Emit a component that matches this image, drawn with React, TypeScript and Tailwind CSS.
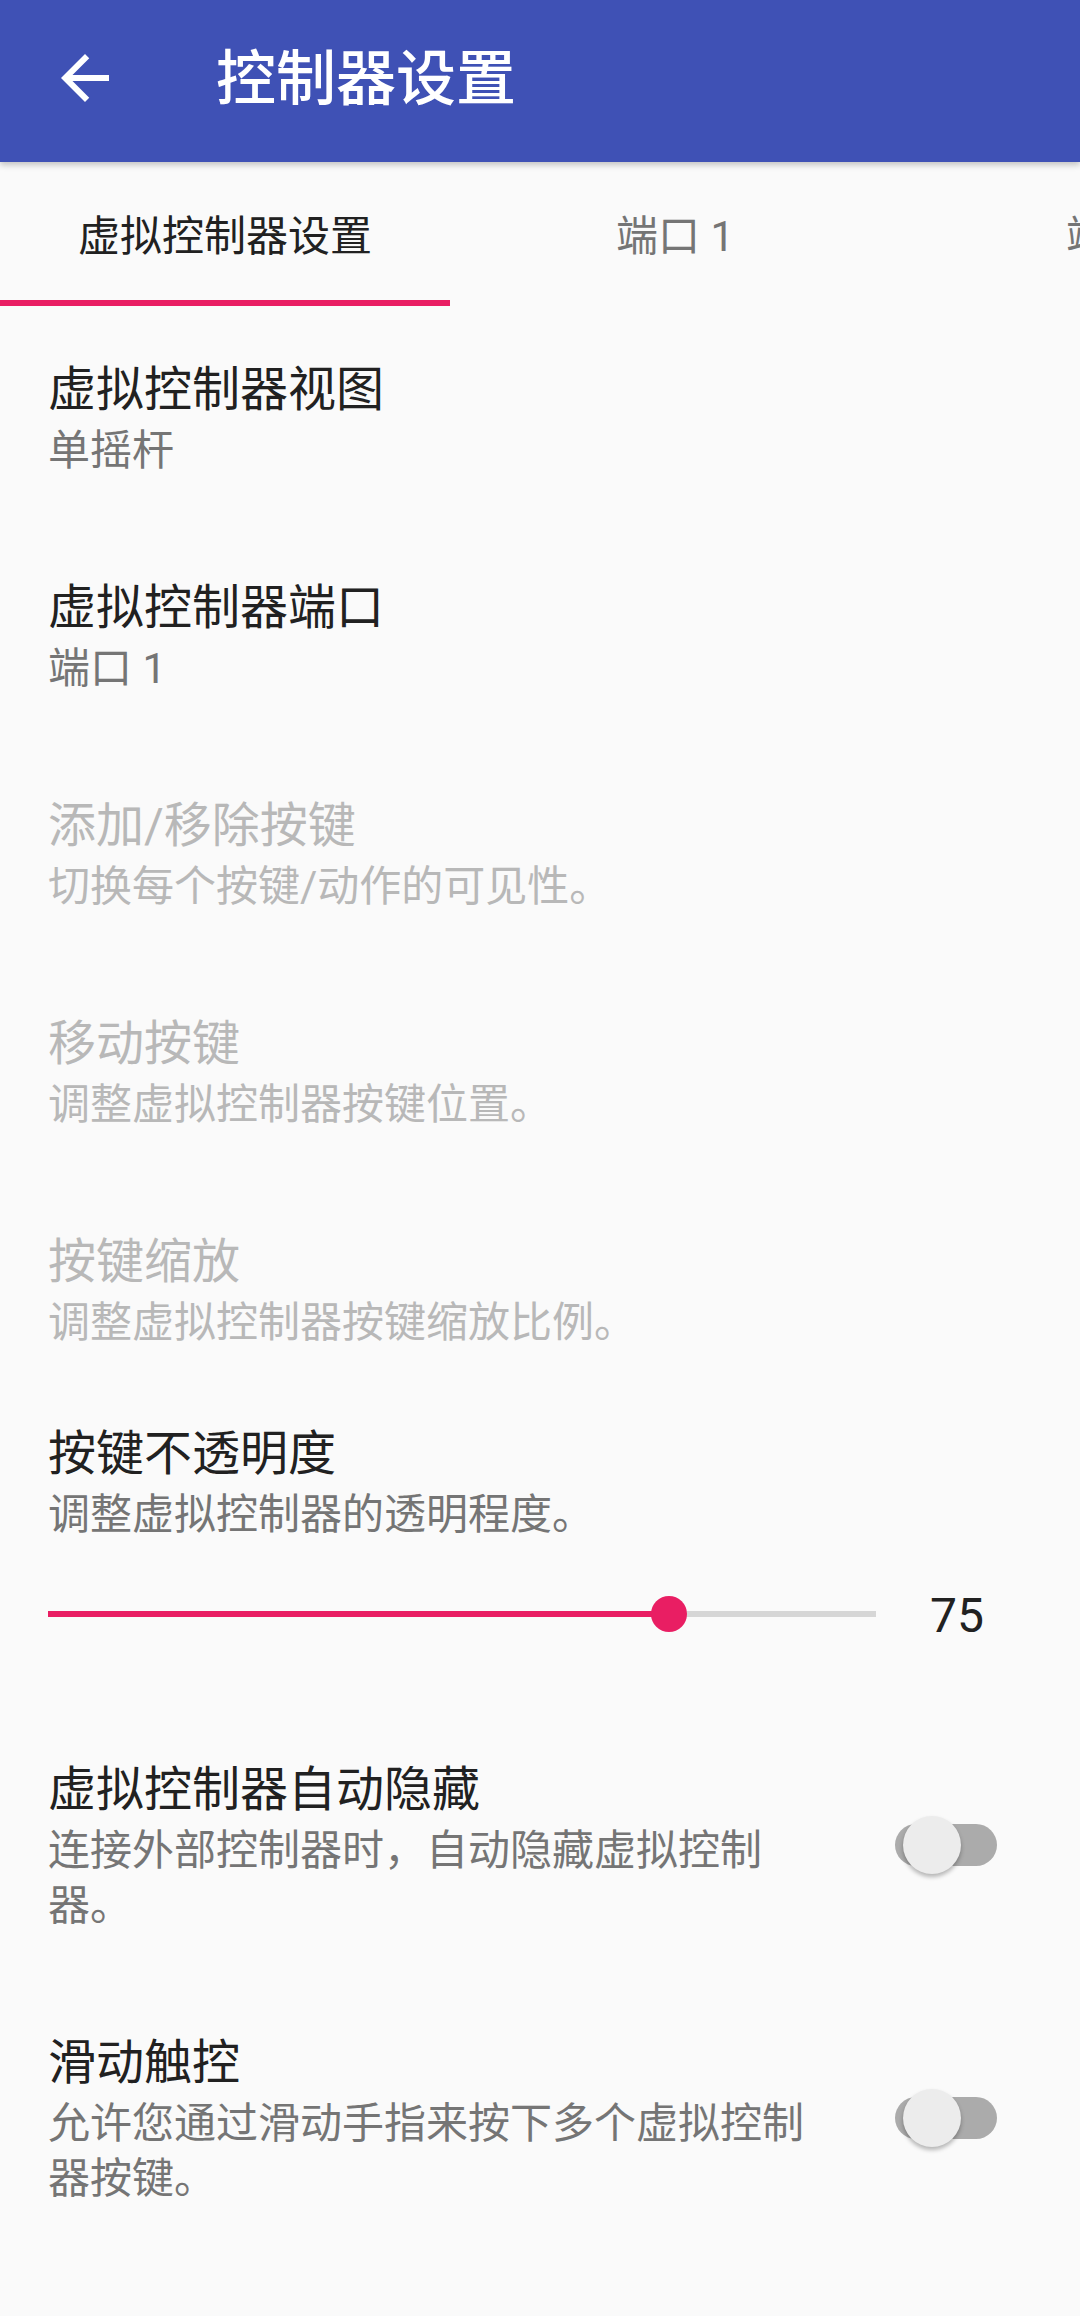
import { MdArrowBack } from "react-icons/md";

type Pref = {
  title: string;
  summary: string;
  disabled?: boolean;
};

const prefs: Pref[] = [
  { title: "虚拟控制器视图", summary: "单摇杆" },
  { title: "虚拟控制器端口", summary: "端口 1" },
  { title: "添加/移除按键", summary: "切换每个按键/动作的可见性。", disabled: true },
  { title: "移动按键", summary: "调整虚拟控制器按键位置。", disabled: true },
  { title: "按键缩放", summary: "调整虚拟控制器按键缩放比例。", disabled: true },
];

const switches = [
  { title: "虚拟控制器自动隐藏", summary: "连接外部控制器时，自动隐藏虚拟控制器。" },
  { title: "滑动触控", summary: "允许您通过滑动手指来按下多个虚拟控制器按键。" },
];

const tabs = ["虚拟控制器设置", "端口 1", "端口 2"];

function Switch() {
  return (
    <div className="relative ml-[77px] h-[42px] w-[102px] rounded-full bg-[#ababab]">
      <div className="absolute left-[8px] top-1/2 h-[58px] w-[58px] -translate-y-1/2 rounded-full bg-[#ececec] shadow-[0_3px_4px_rgba(0,0,0,0.28)]" />
    </div>
  );
}

function App() {
  return (
    <div className="min-h-[2316px] w-[1080px] bg-[#fafafa] font-['Roboto','Noto_Sans_CJK_SC',sans-serif]">
      <header className="relative z-10 flex h-[162px] items-center bg-[#3f51b5] shadow-[0_3px_6px_rgba(0,0,0,0.22)]">
        <div className="mb-[6px] ml-[49px] flex h-[72px] w-[72px] items-center justify-center text-white">
          <MdArrowBack size={72} />
        </div>
        <h1 className="mb-[2px] ml-[95px] text-[60px] font-medium leading-none text-white">
          控制器设置
        </h1>
      </header>

      <div className="flex h-[144px] overflow-hidden">
        {tabs.map((t, i) => (
          <div
            key={t}
            className="relative flex w-[450px] shrink-0 items-center justify-center pt-[6px]"
          >
            <span
              className={`text-[42px] leading-none ${
                i === 0 ? "text-[#212121]" : "text-[#757575]"
              }`}
            >
              {t}
            </span>
            {i === 0 && (
              <div className="absolute bottom-0 left-0 h-[6px] w-full bg-[#e91e63]" />
            )}
          </div>
        ))}
      </div>

      {prefs.map((p) => (
        <div key={p.title} className="px-[48px] pb-[46px] pt-[51px]">
          <p
            className={`text-[48px] leading-[66px] ${
              p.disabled ? "text-[#b8b8b8]" : "text-[#212121]"
            }`}
          >
            {p.title}
          </p>
          <p
            className={`text-[42px] leading-[55px] ${
              p.disabled ? "text-[#b8b8b8]" : "text-[#757575]"
            }`}
          >
            {p.summary}
          </p>
        </div>
      ))}

      <div className="pb-[56px] pl-[48px] pt-[25px]">
        <p className="text-[48px] leading-[66px] text-[#212121]">按键不透明度</p>
        <p className="text-[42px] leading-[55px] text-[#757575]">
          调整虚拟控制器的透明程度。
        </p>
        <div className="mt-[36px] flex h-[72px] items-center">
          <div className="relative h-[6px] w-[828px] bg-[#d6d6d6]">
            <div className="h-full w-[621px] bg-[#e91e63]" />
            <div className="absolute left-[603px] top-1/2 h-[36px] w-[36px] -translate-y-1/2 rounded-full bg-[#e91e63]" />
          </div>
          <span className="ml-[54px] pt-[4px] text-[48px] leading-none text-[#212121]">75</span>
        </div>
      </div>

      {switches.map((s) => (
        <div key={s.title} className="flex items-center pb-[46px] pl-[48px] pt-[51px]">
          <div className="w-[770px]">
            <p className="text-[48px] leading-[66px] text-[#212121]">{s.title}</p>
            <p className="text-[42px] leading-[55px] text-[#757575]">{s.summary}</p>
          </div>
          <Switch />
        </div>
      ))}
    </div>
  );
}

export default App;
